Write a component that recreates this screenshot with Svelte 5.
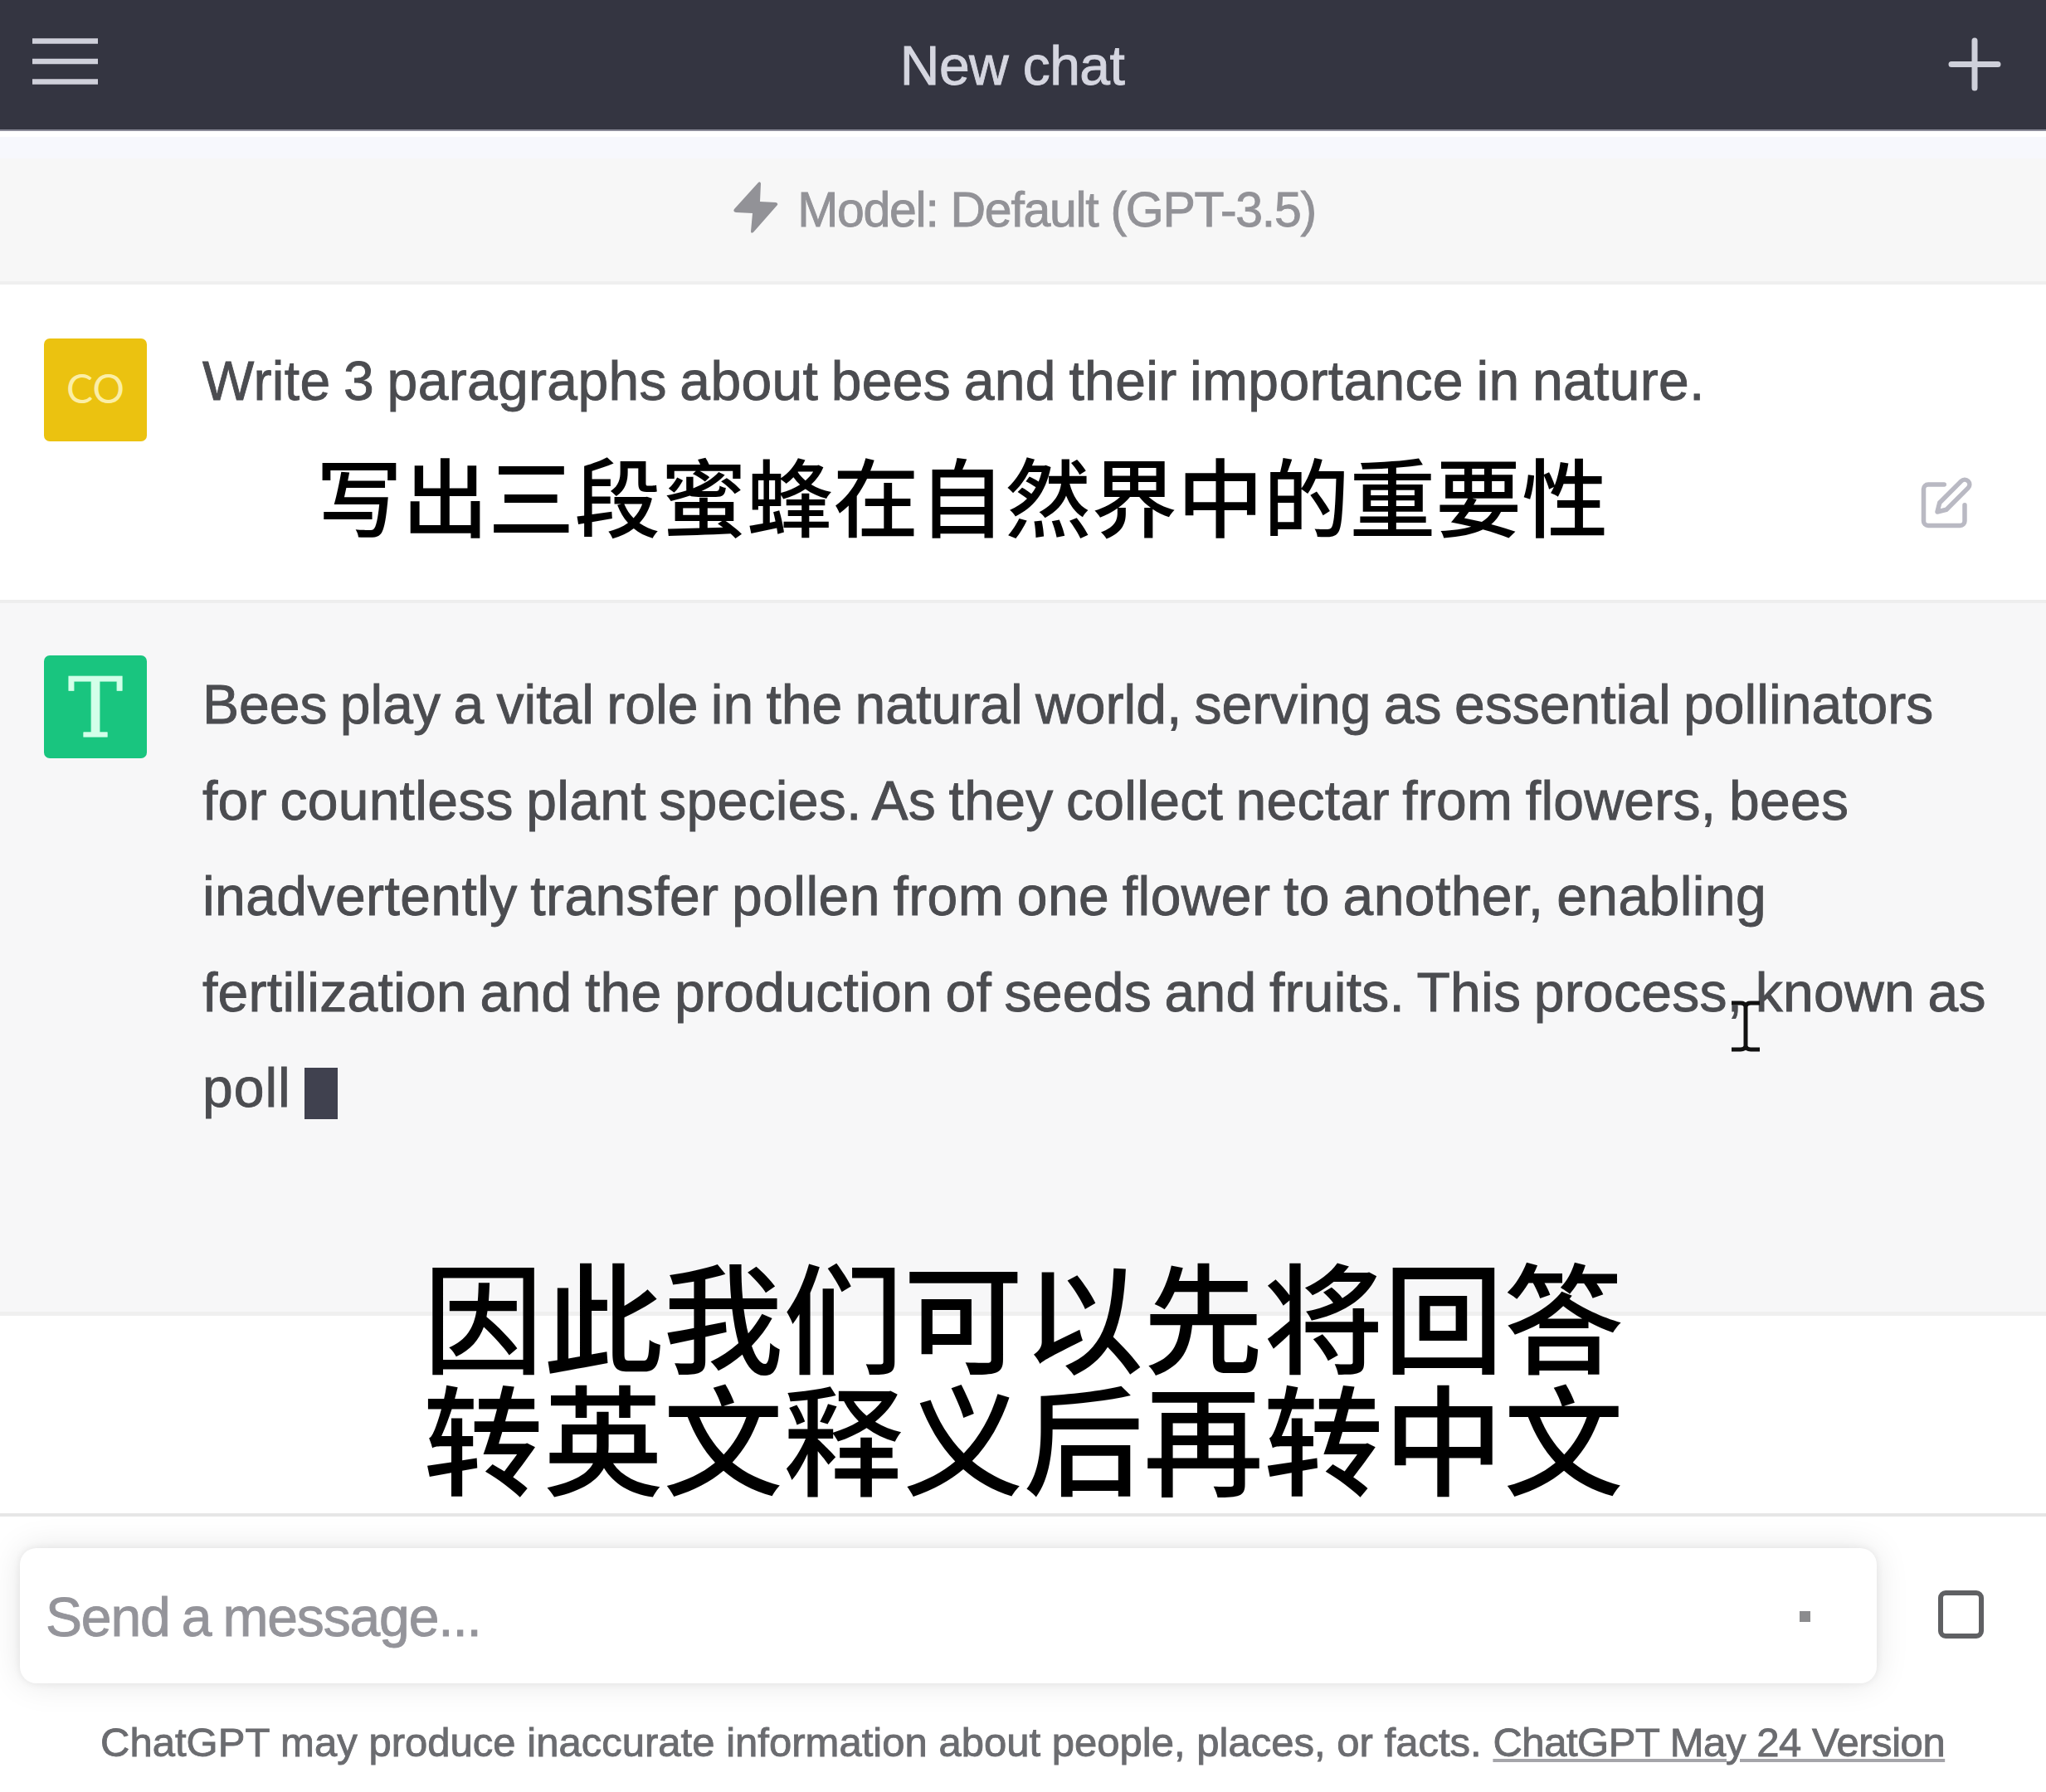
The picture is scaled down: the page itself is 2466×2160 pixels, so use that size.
<script lang="ts">
	interface Line {
		text: string;
		/** letter-spacing in px */
		tracking: number;
	}

	const prompt: Line = {
		text: 'Write 3 paragraphs about bees and their importance in nature.',
		tracking: 0.33
	};

	const reply: Line[] = [
		{ text: 'Bees play a vital role in the natural world, serving as essential pollinators', tracking: 0.04 },
		{ text: 'for countless plant species. As they collect nectar from flowers, bees', tracking: 0.28 },
		{ text: 'inadvertently transfer pollen from one flower to another, enabling', tracking: 0.42 },
		{ text: 'fertilization and the production of seeds and fruits. This process, known as', tracking: 0.27 },
		{ text: 'poll', tracking: 1 }
	];

	const caption = ['因此我们可以先将回答', '转英文释义后再转中文'];
</script>

<div class="app">
	<header class="topbar">
		<svg class="menu" viewBox="0 0 80 60" fill="none" stroke="currentColor" stroke-width="6.5">
			<path d="M0 5.500h79M0 30h79M0 54.500h79" />
		</svg>
		<h1>New chat</h1>
		<svg class="plus" viewBox="0 0 66 66" fill="none" stroke="currentColor" stroke-width="7" stroke-linecap="round">
			<path d="M33 5v57M5 33.500h56" />
		</svg>
	</header>

	<div class="model">
		<svg class="bolt" viewBox="0 0 54 62" fill="currentColor">
			<path d="M30 1 1 33q-2 3.500 2 4L23 38l-2 22q0 3 3 1L53 28q1-2.500-2-3L32 24l1-22q-1-3-3-1z" />
		</svg>
		<span>Model: Default (GPT-3.5)</span>
	</div>

	<section class="message user">
		<div class="avatar co">CO</div>
		<div class="text">
			<p style:letter-spacing="{prompt.tracking}px">{prompt.text}</p>
		</div>
		<svg class="edit" viewBox="0 0 24 24" fill="none" stroke="currentColor" stroke-width="2" stroke-linecap="round" stroke-linejoin="round">
			<path d="M11 4H4a2 2 0 0 0-2 2v14a2 2 0 0 0 2 2h14a2 2 0 0 0 2-2v-7" />
			<path d="M18.500 2.500a2.121 2.121 0 0 1 3 3L12 15l-4 1 1-4 9.500-9.500z" />
		</svg>
		<div class="subtitle">写出三段蜜蜂在自然界中的重要性</div>
	</section>

	<section class="message bot">
		<div class="avatar t">T</div>
		<div class="text">
			{#each reply as line, i}
				<p style:letter-spacing="{line.tracking}px">
					{line.text}{#if i === reply.length - 1}<span class="block"></span>{/if}
				</p>
			{/each}
		</div>
		<svg class="ibeam" viewBox="0 0 34 62" fill="none" stroke="currentColor" stroke-width="5">
			<path d="M0 3h11q5 0 6 4q1-4 6-4h11M17 6v50M0 59h11q5 0 6-4q1 4 6 4h11" />
		</svg>
	</section>

	<div class="spacer"></div>

	<footer>
		<div class="composer">
			<div class="input">
				<span>Send a message...</span>
				<i class="dot"></i>
			</div>
			<i class="stop"></i>
		</div>
		<p class="notice">
			ChatGPT may produce inaccurate information about people, places, or facts.
			<a href="#version">ChatGPT May 24 Version</a>
		</p>
	</footer>

	<div class="caption">
		{#each caption as line}
			<div>{line}</div>
		{/each}
	</div>
</div>

<style>
	:global(body) {
		margin: 0;
		background: #fff;
	}

	.app {
		position: relative;
		width: 2466px;
		height: 2160px;
		overflow: hidden;
		background: #fff;
		color: #4b4c50;
		font-family: 'Liberation Sans', Arial, sans-serif;
		font-size: 66px;
		-webkit-text-stroke: 0.9px currentColor;
		display: flex;
		flex-direction: column;
	}

	.app * {
		box-sizing: border-box;
	}

	h1,
	p {
		margin: 0;
		font-weight: 400;
		white-space: nowrap;
	}

	svg,
	.avatar {
		flex-shrink: 0;
	}

	/* Top bar */
	.topbar {
		display: flex;
		align-items: flex-start;
		justify-content: space-between;
		height: 158px;
		padding: 44px 53px 0 39px;
		background: #343541;
		border-bottom: 2px solid #8b8b99;
		color: #cfd0da;
	}

	.menu {
		width: 80px;
		height: 60px;
	}

	.plus {
		width: 66px;
		height: 66px;
	}

	h1 {
		margin: -3px 26px 0 0;
		font-size: 66px;
		line-height: 76px;
		letter-spacing: -0.6px;
		color: #d5d6e0;
	}

	/* Model bar */
	.model {
		display: flex;
		justify-content: center;
		height: 185px;
		padding: 54px 0 0 4px;
		border-top: 7px solid #fff;
		border-bottom: 4px solid #efefef;
		background: linear-gradient(#f7f8fd 26px, #f7f7f7 26px);
		color: #929297;
		gap: 23px;
		font-size: 59px;
		line-height: 68px;
		letter-spacing: -1.3px;
	}

	.bolt {
		width: 54px;
		height: 62px;
	}

	/* Messages */
	.message {
		position: relative;
		display: flex;
		padding-left: 53px;
	}

	.user {
		height: 380px;
		padding-top: 65px;
	}

	.bot {
		height: 863px;
		padding-top: 63px;
		border-top: 4px solid #eee;
		border-bottom: 5px solid #efefef;
		background: #f7f7f8;
	}

	.avatar {
		display: flex;
		align-items: center;
		justify-content: center;
		width: 124px;
		height: 124px;
		margin-right: 67px;
		border-radius: 7px;
	}

	.co {
		padding-bottom: 5px;
		background: #ebc210;
		color: #fbeea6;
		font: 48px Lato, sans-serif;
		-webkit-text-stroke: 0;
	}

	.t {
		padding-top: 2px;
		background: #19c57f;
		color: #d3ffe9;
		font: 99px 'DejaVu Serif', serif;
	}

	.text {
		margin-top: -6px;
		word-spacing: -3.1px;
	}

	.bot .text {
		margin-top: 2px;
	}

	.text p {
		line-height: 115.6px;
	}

	.block {
		display: inline-block;
		width: 40px;
		height: 62px;
		margin-left: 16px;
		vertical-align: -15px;
		background: #40414f;
	}

	.edit {
		width: 66px;
		height: 66px;
		margin: 165px 87px 0 auto;
		color: #b9b9c3;
	}

	.subtitle {
		position: absolute;
		top: 177px;
		left: 381px;
		color: #000;
		font: 500 103.800px/150px 'Noto Sans CJK SC', sans-serif;
		white-space: nowrap;
		-webkit-text-stroke: 0;
	}

	.ibeam {
		position: absolute;
		top: 479px;
		left: 2087px;
		width: 34px;
		height: 62px;
		color: #111;
	}

	.spacer {
		height: 238px;
	}

	/* Composer */
	footer {
		flex: 1;
		padding: 38px 0 0 24px;
		border-top: 4px solid #e6e6e6;
	}

	.composer {
		display: flex;
		align-items: center;
		gap: 74px;
	}

	.input {
		display: flex;
		align-items: center;
		justify-content: space-between;
		width: 2238px;
		height: 163px;
		padding: 2px 80px 0 31px;
		border-radius: 20px;
		background: #fff;
		box-shadow: 0 0 10px rgba(0, 0, 0, 0.07), 0 0 40px rgba(0, 0, 0, 0.1);
		color: #94949a;
		letter-spacing: -1.15px;
		word-spacing: -3px;
	}

	.dot {
		width: 13px;
		height: 13px;
		background: #8c8c8e;
	}

	.stop {
		width: 55px;
		height: 58px;
		margin-top: -3px;
		border: 6px solid #5f6063;
		border-radius: 9px;
	}

	.notice {
		margin: 42px 0 0 97px;
		color: #6b6c70;
		font-size: 49px;
		line-height: 58px;
		letter-spacing: 0.02px;
	}

	.notice a {
		color: inherit;
		letter-spacing: -0.45px;
		text-decoration-color: #a5a5aa;
		text-decoration-thickness: 4px;
		text-underline-offset: 3px;
	}

	/* Video caption */
	.caption {
		position: absolute;
		top: 1509px;
		left: 510px;
		color: #000;
		font: 500 144.700px/147px 'Noto Sans CJK SC', sans-serif;
		white-space: nowrap;
		-webkit-text-stroke: 0;
	}
</style>
